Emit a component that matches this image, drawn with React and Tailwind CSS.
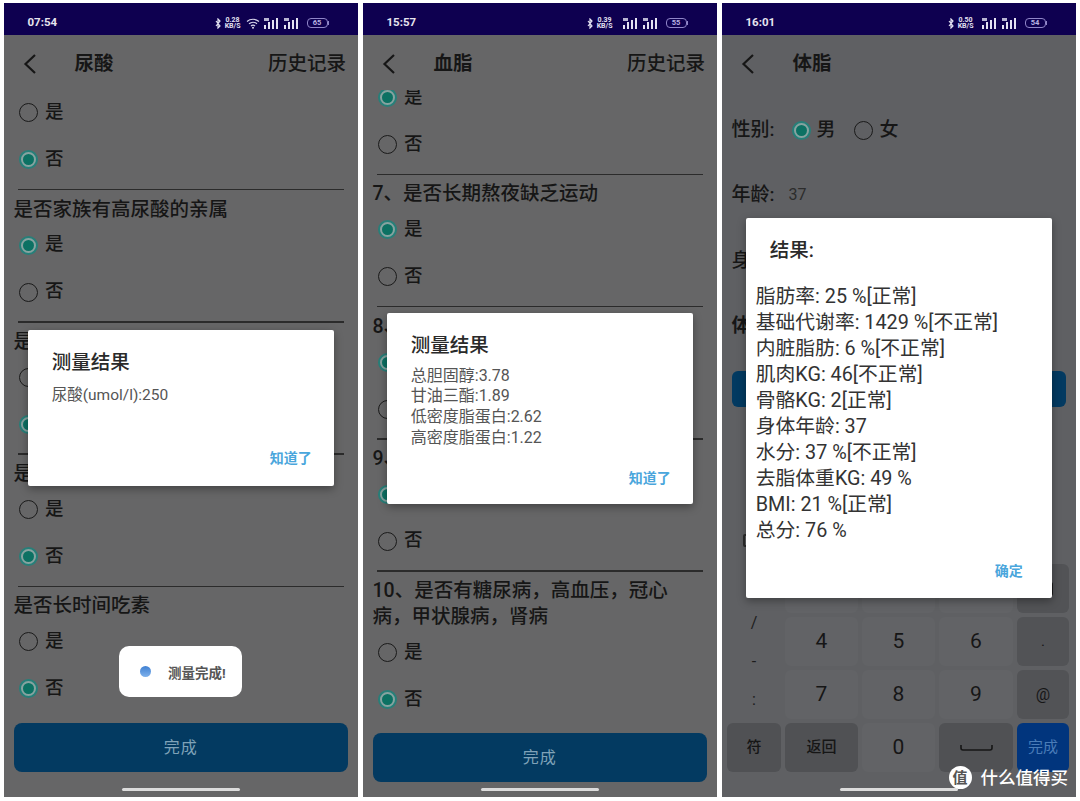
import React from "react";
import { Delete } from "lucide-react";

const Chevron = () => (
  <svg width="14" height="22" viewBox="0 0 14 22" fill="none" className="shrink-0">
    <polyline points="12,2 2.5,11 12,20" stroke="#161616" strokeWidth="2.2" />
  </svg>
);

const Bluetooth = () => (
  <svg width="6" height="11" viewBox="0 0 6 11" fill="none">
    <path d="M1 3l4 5-2 2V1l2 2-4 5" stroke="#e4e2f2" strokeWidth="1.2" />
  </svg>
);

const Wifi = () => (
  <svg width="14" height="11" viewBox="0 0 14 11" fill="none">
    <path d="M1 3.5c3.4-3 8.6-3 12 0M3 5.8c2.3-2 5.7-2 8 0M5 8c1.2-1 2.8-1 4 0" stroke="#d8d5ec" strokeWidth="1.2" />
    <circle cx="7" cy="9.8" r="1" fill="#d8d5ec" />
  </svg>
);

const Signal = () => (
  <svg width="15" height="11" viewBox="0 0 15 11" fill="#e4e2f2">
    <rect x="0" y="0" width="5" height="3" opacity="0.8" />
    <rect x="0" y="7" width="2" height="4" />
    <rect x="4" y="4" width="2" height="7" />
    <rect x="8" y="2" width="2" height="9" />
    <rect x="12" y="0" width="2" height="11" />
  </svg>
);

const Battery = ({ level }) => (
  <div className="flex items-center">
    <div className="w-[21px] h-[10px] rounded-[4px] border border-[#8f85c8] flex items-center justify-center text-[7.5px] leading-none font-bold text-[#b9b2e2]">
      {level}
    </div>
    <div className="w-[1.5px] h-[4px] bg-[#8f85c8]" />
  </div>
);

const StatusBar = ({ time, speed, wifi, battery, gap }) => (
  <div className="h-[32px] shrink-0 bg-[#0e0050] flex items-center justify-between pt-[8px] pl-[24px] pr-[29px]">
    <span className="text-[11.5px] font-bold text-[#e6e4ee]">{time}</span>
    <div className="flex items-center gap-[4px]">
      <Bluetooth />
      <div className="flex flex-col items-center text-[7px] leading-[6px] font-bold text-[#e4e2f2] mr-[1px]">
        <span>{speed}</span>
        <span>KB/S</span>
      </div>
      {wifi && <Wifi />}
      <div className={gap}>
        <Signal />
      </div>
      <div className="ml-[1px]">
        <Signal />
      </div>
      <div className="ml-[4px]">
        <Battery level={battery} />
      </div>
    </div>
  </div>
);

const Header = ({ title, history }) => (
  <div className="h-[55px] shrink-0 flex items-center pl-[19px] pr-[12px] pt-[2px] text-[#161616]">
    <Chevron />
    <span className="ml-[38px] text-[19.5px] font-bold flex-1">{title}</span>
    {history && <span className="text-[19.5px] font-medium">历史记录</span>}
  </div>
);

const Radio = ({ checked }) =>
  checked ? (
    <span className="size-[19px] rounded-full border-2 border-[#277f79] bg-[#86a3a0] flex items-center justify-center shrink-0">
      <span className="size-[11px] rounded-full bg-[#0c7163]" />
    </span>
  ) : (
    <span className="block size-[19px] rounded-full border-[1.5px] border-[#1a1a1a] shrink-0" />
  );

const Option = ({ label, checked }) => (
  <div className="h-[47px] shrink-0 flex items-center gap-[7px] pl-[15.5px] text-[18.5px] font-medium text-[#161616]">
    <Radio checked={checked} />
    <span>{label}</span>
  </div>
);

const Pair = ({ yes }) => (
  <>
    <Option label="是" checked={yes} />
    <Option label="否" checked={!yes} />
  </>
);

const Divider = () => <div className="mt-[5.5px] mx-[14.5px] h-[1.5px] bg-[#2b2b2b] shrink-0" />;

const Question = ({ children }) => (
  <div className="pt-[6.25px] mb-[-1px] pl-[10px] pr-[20px] text-[19.5px] leading-[26px] font-medium text-[#161616] shrink-0">{children}</div>
);

const Group = ({ title, yes }) => (
  <>
    <Divider />
    <Question>{title}</Question>
    <Pair yes={yes} />
  </>
);

const SubmitButton = ({ className }) => (
  <div className={`mx-[10px] h-[49px] shrink-0 rounded-[8px] bg-[#033a61] flex items-center justify-center pt-[1px] text-[16px] tracking-[1px] text-[#7fa2b8] ${className}`}>
    完成
  </div>
);

const HomeBar = () => (
  <div className="absolute bottom-[6px] left-[118px] w-[118px] h-[3px] rounded-full bg-[#dcdcdc]" />
);

const Dialog = ({ height, title, action, actionPad, children }) => (
  <div className="absolute inset-x-0 top-[16px] bottom-0 flex items-center justify-center">
    <div className={`w-[306px] bg-white rounded-[2px] shadow-[0_3px_8px_rgba(0,0,0,0.35)] flex flex-col text-[#333] ${height}`}>
      <div className="pl-[24px] pt-[20px] text-[19.5px] leading-[26px] font-medium text-[#2a2a2a]">{title}</div>
      <div className="flex-1">{children}</div>
      <div className={`text-right text-[14px] leading-[18px] font-bold text-[#4aa6dc] ${actionPad}`}>{action}</div>
    </div>
  </div>
);

const UricAcid = () => (
  <div className="relative w-[354.5px] h-[794px] bg-[#666667] flex flex-col overflow-hidden">
    <StatusBar time="07:54" speed="0.28" wifi battery="65" gap="" />
    <Header title="尿酸" history />
    <div className="flex-1 min-h-0 overflow-hidden flex flex-col">
      <div className="mt-[-0.75px]" />
      <Pair yes={false} />
      <Group title="是否家族有高尿酸的亲属" yes />
      <Group title="是否饮酒" yes={false} />
      <Group title="是否痛风" yes={false} />
      <Group title="是否长时间吃素" yes={false} />
    </div>
    <SubmitButton className="mb-[25px]" />
    <HomeBar />
    <Dialog height="h-[156px]" title="测量结果" action="知道了" actionPad="pr-[22px] pb-[19px]">
      <div className="pl-[24px] pt-[9px] text-[15.5px] leading-[21px] text-[#555]">尿酸(umol/l):250</div>
    </Dialog>
    <div className="absolute left-[115.5px] top-[643px] w-[123px] h-[51px] rounded-[10px] bg-white flex items-center pl-[21px] gap-[17px]">
      <span className="size-[11px] rounded-full bg-linear-to-b from-[#3f80d2] to-[#7fb2ec]" />
      <span className="pt-[3px] text-[13.5px] font-bold text-[#555]">测量完成!</span>
    </div>
  </div>
);

const lipidRows = ["总胆固醇:3.78", "甘油三酯:1.89", "低密度脂蛋白:2.62", "高密度脂蛋白:1.22"];

const BloodLipid = () => (
  <div className="relative w-[354.5px] h-[794px] bg-[#666667] flex flex-col overflow-hidden">
    <StatusBar time="15:57" speed="0.39" battery="55" gap="ml-[5px]" />
    <Header title="血脂" history />
    <div className="flex-1 min-h-0 overflow-hidden flex flex-col">
      <div className="mt-[-16px]" />
      <Pair yes />
      <Group title="7、是否长期熬夜缺乏运动" yes />
      <Group title="8、是否经常吃油腻食物" yes />
      <Group title="9、是否超重" yes />
      <Group title="10、是否有糖尿病，高血压，冠心病，甲状腺病，肾病" yes={false} />
    </div>
    <SubmitButton className="mb-[15px]" />
    <HomeBar />
    <Dialog height="h-[191px]" title="测量结果" action="知道了" actionPad="pr-[22px] pb-[17px]">
      <div className="pl-[24px] pt-[7px] text-[16px] leading-[20.7px] text-[#555]">
        {lipidRows.map((row) => (
          <div key={row}>{row}</div>
        ))}
      </div>
    </Dialog>
  </div>
);

const resultRows = [
  "脂肪率: 25 %[正常]",
  "基础代谢率: 1429 %[不正常]",
  "内脏脂肪: 6 %[不正常]",
  "肌肉KG: 46[不正常]",
  "骨骼KG: 2[正常]",
  "身体年龄: 37",
  "水分: 37 %[不正常]",
  "去脂体重KG: 49 %",
  "BMI: 21 %[正常]",
  "总分: 76 %",
];

const Key = ({ className = "bg-[#626366]", children }) => (
  <div className={`rounded-[6px] flex items-center justify-center text-[#161616] ${className}`}>{children}</div>
);

const Keyboard = () => (
  <div className="mx-[5.5px] mb-[25px] grid grid-cols-[54px_73px_73px_74px_52px] grid-rows-[49px_49px_49px_49px] gap-x-[4px] gap-y-[4px] shrink-0">
    <div className="row-span-3 flex flex-col pt-[2px] text-[16px] text-[#1c1c1c]">
      {[",", "/", "-", ":"].map((s) => (
        <div key={s} className="h-[39px] flex items-center justify-center">{s}</div>
      ))}
    </div>
    {["1", "2", "3"].map((n) => (
      <Key key={n} className="bg-[#626366] text-[21px]">{n}</Key>
    ))}
    <Key className="bg-[#525356]">
      <Delete size={22} strokeWidth={1.6} color="#161616" />
    </Key>
    {["4", "5", "6"].map((n) => (
      <Key key={n} className="bg-[#626366] text-[21px]">{n}</Key>
    ))}
    <Key className="bg-[#525356] text-[15px]">.</Key>
    {["7", "8", "9"].map((n) => (
      <Key key={n} className="bg-[#626366] text-[21px]">{n}</Key>
    ))}
    <Key className="bg-[#525356] text-[16px]">@</Key>
    <Key className="bg-[#505154] text-[15px] font-medium">符</Key>
    <Key className="bg-[#505154] text-[15px] font-medium">返回</Key>
    <Key className="bg-[#626366] text-[21px]">0</Key>
    <Key className="bg-[#505154]">
      <svg width="33" height="8" viewBox="0 0 33 8" fill="none">
        <path d="M1 1v3q0 2 2 2h27q2 0 2-2V1" stroke="#161616" strokeWidth="1.6" />
      </svg>
    </Key>
    <Key className="bg-[#01357d] text-[15px]">
      <span className="text-[#4a7cb8]">完成</span>
    </Key>
  </div>
);

const BodyFat = () => (
  <div className="relative w-[354.5px] h-[794px] bg-[#5f6063] flex flex-col overflow-hidden">
    <StatusBar time="16:01" speed="0.50" battery="54" gap="ml-[3px]" />
    <Header title="体脂" />
    <div className="flex-1 min-h-0 flex flex-col pl-[10px] pr-[10px] text-[19px] font-medium text-[#161616]">
      <div className="mt-[24px] h-[32px] flex items-center">
        <span>性别:</span>
        <span className="ml-[17px]"><Radio checked /></span>
        <span className="ml-[6px]">男</span>
        <span className="ml-[18px]"><Radio /></span>
        <span className="ml-[7px]">女</span>
      </div>
      <div className="mt-[33px] h-[32px] flex items-center">
        <span>年龄:</span>
        <span className="ml-[14px] text-[16px] font-normal text-[#2c2c2c]">37</span>
      </div>
      <div className="mt-[34px] h-[32px] flex items-center">身高:</div>
      <div className="mt-[33px] h-[32px] flex items-center font-bold">体重:</div>
      <div className="mt-[29px] h-[36px] shrink-0 rounded-[6px] bg-[#033a61]" />
      <div className="mt-auto mb-[17px] ml-[11px] w-[12px] h-[13px] rounded-[2px] border-2 border-[#2c2c2c]" />
    </div>
    <Keyboard />
    <HomeBar />
    <div className="absolute right-[8px] bottom-[6px] flex items-center gap-[9px]">
      <span className="size-[23px] rounded-full bg-white text-[#555] flex items-center justify-center text-[15px] font-bold">值</span>
      <span className="text-[17.5px] font-medium text-white">什么值得买</span>
    </div>
    <Dialog height="h-[380px]" title="结果:" action="确定" actionPad="pr-[29px] pb-[18px]">
      <div className="pl-[10px] pt-[20px] text-[19.8px] leading-[26px] text-[#333]">
        {resultRows.map((row) => (
          <div key={row}>{row}</div>
        ))}
      </div>
    </Dialog>
  </div>
);

export default function App() {
  return (
    <div className="w-[1080px] h-[801px] bg-white overflow-hidden flex gap-[4.5px] pl-[3.5px] pt-[3px] font-['Roboto','Noto_Sans_CJK_SC',sans-serif]">
      <UricAcid />
      <BloodLipid />
      <BodyFat />
    </div>
  );
}
